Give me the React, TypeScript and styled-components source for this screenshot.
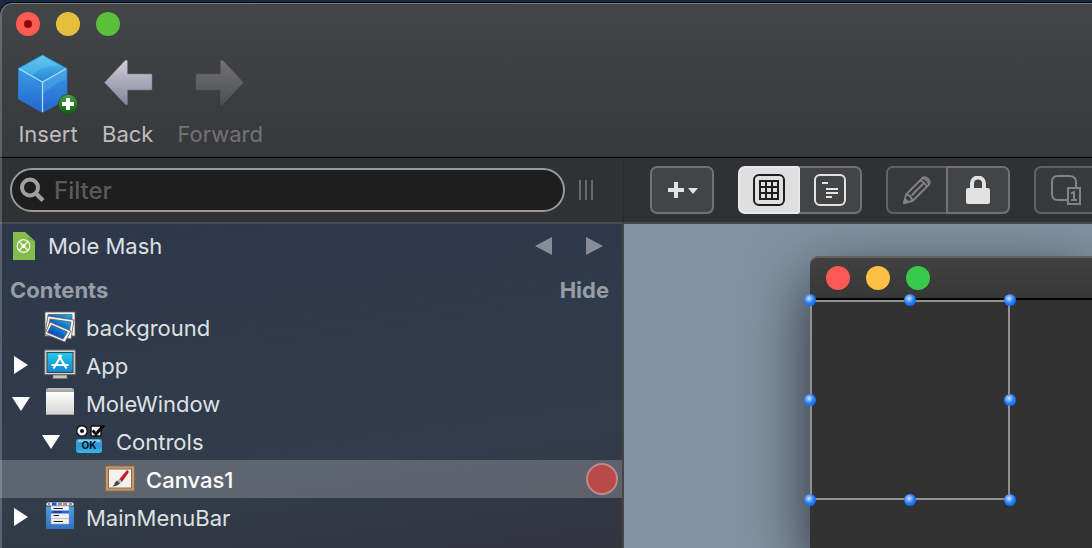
import React, { useState } from "react";
import styled, { createGlobalStyle, css } from "styled-components";

const GlobalStyle = createGlobalStyle`
  *, *::before, *::after { box-sizing: border-box; }
  html, body, #root { height: 100%; margin: 0; }
  body {
    background: #1b2a40;
    color: #dfe0e2;
    font-family: Inter, Roboto, "Liberation Sans", sans-serif;
    font-size: 22px;
    line-height: 28px;
    overflow: hidden;
  }
  button, input { font: inherit; color: inherit; }
  button { border: 0; padding: 0; background: none; cursor: pointer; }
  svg { display: block; flex: none; }
`;

const Page = styled.div`
  height: 100vh;
  padding-top: 3px;
`;

const AppWindow = styled.div`
  position: relative;
  display: flex;
  flex-direction: column;
  height: 100%;
  overflow: hidden;
  border-radius: 12px 0 0 0;
  box-shadow: 0 0 0 1px #07090c;

  &::after {
    content: "";
    position: absolute;
    inset: 0;
    border-left: 2px solid rgba(255, 255, 255, 0.2);
    border-top: 1px solid rgba(255, 255, 255, 0.3);
    border-radius: 12px 0 0 0;
    pointer-events: none;
  }
`;

const Header = styled.header`
  flex: none;
  padding: 9px 16px 9px;
  background: linear-gradient(#444547, #37383b);
  border-bottom: 1px solid #000;
`;

const Lights = styled.div`
  display: flex;
  gap: 16px;
`;

const Light = styled.button<{ $color: string }>`
  display: grid;
  place-items: center;
  width: 24px;
  height: 24px;
  border-radius: 50%;
  background: ${(p) => p.$color};
`;

const EditedDot = styled.span`
  width: 8px;
  height: 8px;
  border-radius: 50%;
  background: #8f0407;
`;

const Tools = styled.div`
  display: flex;
  gap: 24px;
  margin-top: 18px;
  padding-left: 2px;
`;

const Tool = styled.button`
  display: flex;
  flex-direction: column;
  align-items: center;
  gap: 6px;
  color: #bcbdbf;

  &:disabled { color: #727376; }
`;

const Bar = styled.div`
  flex: none;
  display: flex;
  background: #303134;
`;

const FilterSide = styled.div`
  flex: none;
  display: flex;
  align-items: center;
  gap: 14px;
  width: 624px;
  max-width: 60%;
  height: 66px;
  padding: 0 30px 0 10px;
  border-right: 1px solid #2a2b2e;
  border-bottom: 2px solid #414b5a;
`;

const FilterField = styled.label`
  flex: 1;
  min-width: 0;
  display: flex;
  align-items: center;
  gap: 9px;
  height: 44px;
  padding: 0 16px 0 7px;
  border: 2px solid #999;
  border-radius: 22px;
  background: #1e1e1e;
`;

const FilterInput = styled.input`
  flex: 1;
  min-width: 0;
  border: 0;
  padding: 2px 0 0;
  outline: 0;
  background: none;
  font-size: 24px;
  font-weight: 500;

  &::placeholder { color: #5a5a5a; opacity: 1; }
`;

const Grip = styled.div`
  width: 14px;
  height: 20px;
  border: solid #6a6a6b;
  border-width: 0 2px;
  background: linear-gradient(#6a6a6b, #6a6a6b) center / 2px 100% no-repeat;
`;

const ButtonSide = styled.div`
  flex: 1;
  min-width: 0;
  overflow: hidden;
  display: flex;
  align-items: center;
  gap: 24px;
  padding-left: 26px;
  border-bottom: 2px solid #47484b;
`;

const Group = styled.div`
  flex: none;
  display: flex;
`;

const Segment = styled.button<{ $tone?: "raised" | "active" | "muted"; $divider?: string }>`
  display: grid;
  place-items: center;
  width: 64px;
  height: 48px;
  border: 2px solid #727274;
  background: #434446;
  color: #e2e2e2;

  &:first-child { border-top-left-radius: 7px; border-bottom-left-radius: 7px; }
  &:last-child { border-top-right-radius: 7px; border-bottom-right-radius: 7px; }
  &:not(:last-child) { width: 60px; border-right: 0; }

  ${(p) => p.$tone === "active" && css`
    border-color: #e9e9e9;
    background: #dfdfdf;
    color: #1e1e1e;
  `}
  ${(p) => p.$tone === "muted" && css`
    border-color: #626264;
    background: #38393b;
    color: #828284;
  `}
  ${(p) => p.$divider && css`border-left-color: ${p.$divider};`}
`;

const Body = styled.div`
  flex: 1;
  min-height: 0;
  display: flex;
`;

const Sidebar = styled.aside`
  flex: none;
  width: 624px;
  max-width: 60%;
  overflow: hidden;
  border-right: 2px solid #464647;
  background: linear-gradient(172deg, #2d394a 0%, #2f3b4b 45%, #323c4a 70%, #32343e 100%);
`;

const ProjectRow = styled.div`
  display: flex;
  align-items: center;
  height: 44px;
  padding: 0 9px 0 12px;
`;

const ProjectName = styled.span`
  flex: 1;
  margin-left: 12px;
`;

const NavButton = styled.button`
  display: grid;
  place-items: center;
  width: 50px;
  height: 32px;
  margin-right: 0;
  color: #878c96;

  &:last-child { width: 50px; margin-right: -6px; }
`;

const SectionRow = styled.div`
  display: flex;
  justify-content: space-between;
  align-items: center;
  height: 40px;
  padding: 4px 13px 0 10px;
  color: #989ca4;
  font-weight: 700;
`;

const HideButton = styled.button`
  font-weight: 700;
`;

const Tree = styled.ul`
  margin: 0;
  padding: 0;
  list-style: none;
`;

const Item = styled.li<{ $depth: number; $selected?: boolean }>`
  display: flex;
  align-items: center;
  height: 38px;
  padding: 0 4px 0 ${(p) => 10 + p.$depth * 30}px;
  ${(p) => p.$selected && css`
    background: rgba(255, 255, 255, 0.21);
    color: #fff;
    font-weight: 500;
  `}
`;

const Disclosure = styled.button`
  display: grid;
  place-items: center;
  width: 22px;
  height: 24px;
  color: #fff;
`;

const DisclosureSpace = styled.span`
  width: 22px;
`;

const ItemIcon = styled.span`
  margin: 0 10px 0 12px;
`;

const ItemName = styled.span`
  flex: 1;
  padding-top: 2px;
`;

const Breakpoint = styled.button`
  width: 32px;
  height: 32px;
  border: 2px solid #c08a8b;
  border-radius: 50%;
  background: #b94a4a;
`;

const Canvas = styled.main`
  flex: 1;
  min-width: 0;
  display: flex;
  overflow: hidden;
  padding: 32px 0 0 186px;
  background: #8192a2;
`;

const DesignWindow = styled.section`
  flex: 1;
  min-width: 240px;
  display: flex;
  flex-direction: column;
  background: #323232;
  border-top-left-radius: 9px;
  box-shadow: 0 24px 64px rgba(0, 0, 0, 0.7);
`;

const DesignTitle = styled.div`
  flex: none;
  display: flex;
  align-items: center;
  gap: 16px;
  height: 44px;
  padding-left: 16px;
  border-top: 2px solid #636364;
  border-bottom: 2px solid #000;
  border-top-left-radius: 9px;
  background: linear-gradient(#414141, #373737);
`;

const DesignContent = styled.div`
  flex: 1;
`;

const Selection = styled.div`
  position: relative;
  width: 200px;
  height: 200px;
  border: 2px solid #919191;
`;

const Handle = styled.span<{ $x: number; $y: number }>`
  position: absolute;
  left: calc(${(p) => p.$x}% - 2px + ${(p) => p.$x / 25}px);
  top: calc(${(p) => p.$y}% - 2px + ${(p) => p.$y / 25}px);
  width: 12px;
  height: 12px;
  margin: -6px 0 0 -6px;
  border-radius: 50%;
  background: radial-gradient(circle at 42% 38%, #dbe9ff 0, #8ab7ff 20%, #2b80ff 45%, #0f74ff 65%);
`;

const CubeIcon = () => (
  <svg width="60" height="60" viewBox="0 0 60 60" aria-hidden="true">
    <defs>
      <linearGradient id="cubeTop" x1="0" y1="0" x2="0" y2="1">
        <stop offset="0" stopColor="#5cc7ee" /><stop offset="1" stopColor="#2482d8" />
      </linearGradient>
      <linearGradient id="cubeSide" x1="0" y1="0" x2="0" y2="1">
        <stop offset="0" stopColor="#42ade8" /><stop offset="1" stopColor="#2464d2" />
      </linearGradient>
      <linearGradient id="plusGreen" x1="0" y1="0" x2="0" y2="1">
        <stop offset="0" stopColor="#4ba044" /><stop offset="1" stopColor="#155d12" />
      </linearGradient>
    </defs>
    <path d="M24.500 1L49 14.500V45L24.500 58.500L0 45V14.500Z" fill="url(#cubeSide)" />
    <path d="M24.500 1L49 14.500L24.500 28L0 14.500Z" fill="url(#cubeTop)" />
    <path d="M6 11L24.500 1L45 12Q24 10 14 22L0 14.500Z" fill="#65d2f3" opacity=".35" />
    <path d="M24.500 28L49 14.500V25Q36 29 24.500 41Z" fill="#6ccaf5" opacity=".25" />
    <path d="M.500 14.500L24.500 28L48.500 14.500M24.500 28V58" stroke="#a9def7" strokeWidth="1.300" fill="none" />
    <path d="M24.500 1L49 14.500V45L24.500 58.500L.500 45V14.500Z" fill="none" stroke="#2373cf" strokeWidth="1" opacity=".8" />
    <circle cx="50" cy="50" r="9.600" fill="url(#plusGreen)" stroke="#185c17" strokeWidth=".8" />
    <path d="M50 44V56M44 50H56" stroke="#fff" strokeWidth="4" />
  </svg>
);

const ArrowIcon = ({ forward = false }: { forward?: boolean }) => (
  <svg width="50" height="60" viewBox="0 0 50 60" aria-hidden="true">
    <defs>
      <linearGradient id={forward ? "arrowF" : "arrowB"} x1="0" y1="0" x2="0" y2="1">
        <stop offset="0" stopColor={forward ? "#717176" : "#cfced9"} />
        <stop offset="1" stopColor={forward ? "#4e4e56" : "#858399"} />
      </linearGradient>
    </defs>
    <path
      d="M1.500 28.500L22 6.500Q24.500 5 24.500 7.500V20H48Q49 20 49 21V35Q49 36 48 36H24.500V49.500Q24.500 52 22 50Z"
      transform={forward ? "matrix(-1 0 0 1 50 0)" : undefined}
      fill={`url(#${forward ? "arrowF" : "arrowB"})`}
      stroke={forward ? "#55565b" : "#77778a"} strokeWidth=".6"
    />
  </svg>
);

const SearchIcon = () => (
  <svg width="26" height="26" viewBox="0 0 26 26" aria-hidden="true" fill="none" stroke="#a0a0a0">
    <circle cx="11" cy="10.500" r="8" strokeWidth="4" />
    <path d="M16.500 16L24 23.500" strokeWidth="4.500" />
  </svg>
);

const AddIcon = () => (
  <svg width="32" height="18" viewBox="0 0 32 18" aria-hidden="true">
    <path d="M10 1V17M2 9H18" stroke="currentColor" strokeWidth="4" />
    <path d="M22 7H32L27 13Z" fill="currentColor" />
  </svg>
);

const GridIcon = () => (
  <svg width="32" height="32" viewBox="0 0 32 32" aria-hidden="true" fill="none" stroke="currentColor" strokeWidth="2">
    <rect x="1" y="1" width="30" height="30" rx="5" />
    <path d="M7 7H25V25H7ZM13 7V25M19 7V25M7 13H25M7 19H25" />
  </svg>
);

const OutlineIcon = () => (
  <svg width="32" height="32" viewBox="0 0 32 32" aria-hidden="true" fill="none" stroke="currentColor" strokeWidth="2">
    <rect x="1" y="1" width="30" height="30" rx="5" />
    <path d="M8 9H14M12 15H24M12 19H24M12 23H18" />
  </svg>
);

const PencilIcon = () => (
  <svg width="30" height="30" viewBox="0 0 30 30" aria-hidden="true" fill="none" stroke="currentColor" strokeWidth="1.800" strokeLinejoin="round">
    <path d="M2 28L4 19.500L20.500 3Q23 1 26 4T27 9.500L10.500 26Z" />
    <path d="M4 19.500Q9 20 10.500 26M9.500 20.500L22.500 7.500M18 5.500Q23 7 24.500 12M20.500 3Q25.500 4.500 27 9.500" />
    <path d="M2 28L3 24L6 27Z" fill="currentColor" />
  </svg>
);

const LockIcon = () => (
  <svg width="24" height="28" viewBox="0 0 24 28" aria-hidden="true">
    <path d="M6 13V7.500A6 6 0 0 1 18 7.500V13" fill="none" stroke="currentColor" strokeWidth="4" />
    <rect y="12" width="24" height="16" rx="2" fill="currentColor" />
  </svg>
);

const TabOrderIcon = () => (
  <svg width="30" height="30" viewBox="0 0 30 30" aria-hidden="true" fill="none" stroke="currentColor" strokeWidth="2">
    <path d="M16 25H7Q1 25 1 19V7Q1 1 7 1H18Q25 1 25 7V12" />
    <rect x="17" y="13" width="12" height="16" fill="#38393b" />
    <path d="M20 18.500L23 17V25M20 25H26" />
  </svg>
);

const ProjectIcon = () => (
  <svg width="24" height="30" viewBox="0 0 24 30" aria-hidden="true">
    <path d="M1 1H13L23 10V29H1Z" fill="#84bd4c" />
    <path d="M15 6L17 8.500L23 10Z" fill="#5e9a38" />
    <g fill="none" stroke="#eef7e5" strokeWidth="1.200">
      <circle cx="11.500" cy="15" r="6.300" />
      <path d="M7 10.500L16 19.500M16 10.500L7 19.500" />
    </g>
    <circle cx="11.500" cy="15" r="2" fill="#fff" />
  </svg>
);

const Triangle = ({ dir }: { dir: "left" | "right" | "down" }) => (
  <svg width="18" height="18" viewBox="0 0 18 18" aria-hidden="true" fill="currentColor">
    {dir === "left" && <path d="M0 9L17 0V18Z" />}
    {dir === "right" && <path d="M18 9L1 0V18Z" />}
    {dir === "down" && <path d="M0 3H18L9 17Z" />}
  </svg>
);

const DisclosureRight = () => (
  <svg width="18" height="18" viewBox="0 0 18 18" aria-hidden="true" fill="currentColor">
    <path d="M2 0V18L16 9Z" />
  </svg>
);

const PhotosIcon = () => (
  <svg width="32" height="32" viewBox="0 0 32 32" aria-hidden="true">
    <defs>
      <linearGradient id="photo" x1="0" y1="1" x2="1" y2="0">
        <stop offset="0" stopColor="#0a2aa0" /><stop offset=".5" stopColor="#0a66c8" /><stop offset="1" stopColor="#1dc0ec" />
      </linearGradient>
    </defs>
    <g stroke="#64605e" strokeWidth=".8" fill="#f5f3f1">
      <path d="M1 1H31V25H1Z" />
      <path d="M4 3.500H28V12H4Z" fill="url(#photo)" />
      <path d="M4 5L30 9L27 28L1 22Z" />
      <path d="M6 8L27 11L25 22L4 18Z" fill="url(#photo)" />
      <path d="M6 11L27 20L21 31L1 23Z" />
      <path d="M7.500 14L23.500 21L19 28L3.500 21.500Z" fill="url(#photo)" />
    </g>
  </svg>
);

const AppIcon = () => (
  <svg width="32" height="32" viewBox="0 0 32 32" aria-hidden="true">
    <defs>
      <linearGradient id="screen" x1="0" y1="0" x2="0" y2="1">
        <stop offset="0" stopColor="#23cbe9" /><stop offset="1" stopColor="#1582d2" />
      </linearGradient>
    </defs>
    <path d="M9 26H23V29.500H9Z" fill="#c9c5c2" stroke="#74706e" strokeWidth=".8" />
    <path d="M.700 1H31.300V25.500H.700Z" fill="#d8d5d3" stroke="#6d6967" />
    <rect x="3" y="3.500" width="26" height="20" fill="url(#screen)" stroke="#34454f" />
    <path d="M17.500 6L9.500 19.500M14.500 6L22.500 19.500M7.500 16H24.500" stroke="#fff" strokeWidth="2.200" fill="none" />
  </svg>
);

const WindowIcon = () => (
  <svg width="32" height="32" viewBox="0 0 32 32" aria-hidden="true">
    <defs>
      <linearGradient id="pane" x1="0" y1="0" x2="0" y2="1">
        <stop offset="0" stopColor="#fff" /><stop offset="1" stopColor="#d6d4d4" />
      </linearGradient>
    </defs>
    <path d="M2 6V3Q2 1 4 1H28Q30 1 30 3V6Z" fill="#a5a3a3" />
    <path d="M4 2H28" stroke="#cfcdcd" />
    <rect x="2" y="5" width="28" height="22" fill="url(#pane)" />
    <path d="M2 27.500H30" stroke="#9c9b9d" />
  </svg>
);

const ControlsIcon = () => (
  <svg width="32" height="32" viewBox="0 0 32 32" aria-hidden="true">
    <defs>
      <linearGradient id="okFill" x1="0" y1="0" x2="0" y2="1">
        <stop offset="0" stopColor="#48a9dc" /><stop offset=".5" stopColor="#2f96d5" /><stop offset="1" stopColor="#3fb8eb" />
      </linearGradient>
    </defs>
    <circle cx="8" cy="6" r="5.300" fill="#fff" stroke="#111" strokeWidth="1.400" />
    <circle cx="8" cy="6" r="2" fill="#111" />
    <rect x="17" y="1" width="10" height="10" rx="1" fill="#fff" stroke="#111" strokeWidth="1.400" />
    <path d="M18.500 5.500L22 9L30 0" stroke="#0b0b0b" strokeWidth="3" fill="none" />
    <rect x="2" y="14" width="26" height="14" rx="3" fill="url(#okFill)" />
    <path d="M4 16H26" stroke="#73d3ef" strokeWidth="2" />
    <text x="15" y="24" textAnchor="middle" fontSize="10" fontWeight="700" fill="#06131d">OK</text>
  </svg>
);

const CanvasIcon = () => (
  <svg width="32" height="32" viewBox="0 0 32 32" aria-hidden="true">
    <rect x="1.500" y="3" width="29" height="25" fill="#c89a6c" stroke="#8f6845" />
    <rect x="4.500" y="6" width="23" height="19" fill="#f3f2f1" stroke="#8a6c50" />
    <path d="M15 17L23 7.500Q25 7.500 24 10L17.500 19Z" fill="#d8161b" stroke="#8d0d10" strokeWidth=".5" />
    <path d="M13 18L15.500 16L18 18.500L15.500 20.500Z" fill="#b5b5b5" />
    <path d="M13 17.500L16 20.500Q13 23.500 8 23.500Q11 21.500 11 19.500Z" fill="#55483f" />
  </svg>
);

const MenuBarIcon = () => (
  <svg width="32" height="32" viewBox="0 0 32 32" aria-hidden="true">
    <defs>
      <linearGradient id="desk" x1="0" y1="0" x2="0" y2="1">
        <stop offset="0" stopColor="#4fa3df" /><stop offset="1" stopColor="#3470c4" />
      </linearGradient>
    </defs>
    <rect x="2" y="2" width="28" height="26" rx="1" fill="url(#desk)" />
    <path d="M2 5V3Q2 1 4 1H28Q30 1 30 3V5Z" fill="#efefef" stroke="#303234" strokeWidth=".8" />
    <path d="M4 3H6M14 3H18M19 3H23M25 3H28" stroke="#343434" strokeWidth="1.200" />
    <path d="M8 1.500H12.500V4.500H8Z" fill="#1f56e0" />
    <rect x="7" y="5" width="18" height="18" fill="#f0f0f0" stroke="#8fa6bd" strokeWidth=".5" />
    <path d="M7 9.500H25V12.500H7Z" fill="#2463ea" />
    <path d="M9.500 7.500H19M9.500 11H18M9.500 14.500H15M9.500 20.500H19" stroke="#222" strokeWidth="1.100" />
    <path d="M7 17.500H25" stroke="#c5c5c5" />
  </svg>
);

type Node = {
  name: string;
  depth: number;
  icon: React.ReactNode;
  state?: "open" | "closed";
  marked?: boolean;
};

const nodes: Node[] = [
  { name: "background", depth: 0, icon: <PhotosIcon /> },
  { name: "App", depth: 0, icon: <AppIcon />, state: "closed" },
  { name: "MoleWindow", depth: 0, icon: <WindowIcon />, state: "open" },
  { name: "Controls", depth: 1, icon: <ControlsIcon />, state: "open" },
  { name: "Canvas1", depth: 2, icon: <CanvasIcon />, marked: true },
  { name: "MainMenuBar", depth: 0, icon: <MenuBarIcon />, state: "closed" },
];

const handles = [[0, 0], [50, 0], [100, 0], [0, 50], [100, 50], [0, 100], [50, 100], [100, 100]];

export default function App() {
  const [filter, setFilter] = useState("");
  const [selected, setSelected] = useState("Canvas1");

  return (
    <>
      <GlobalStyle />
      <Page>
        <AppWindow>
          <Header>
            <Lights>
              <Light $color="#fe5a54" aria-label="Close"><EditedDot /></Light>
              <Light $color="#e5bf3c" aria-label="Minimize" />
              <Light $color="#59c139" aria-label="Zoom" />
            </Lights>
            <Tools>
              <Tool><CubeIcon />Insert</Tool>
              <Tool><ArrowIcon />Back</Tool>
              <Tool disabled><ArrowIcon forward />Forward</Tool>
            </Tools>
          </Header>

          <Bar>
            <FilterSide>
              <FilterField>
                <SearchIcon />
                <FilterInput
                  aria-label="Filter"
                  placeholder="Filter"
                  value={filter}
                  onChange={(e) => setFilter(e.target.value)}
                />
              </FilterField>
              <Grip />
            </FilterSide>
            <ButtonSide>
              <Group><Segment aria-label="Add"><AddIcon /></Segment></Group>
              <Group>
                <Segment $tone="active" aria-label="Layout view"><GridIcon /></Segment>
                <Segment $divider="#e9e9e9" aria-label="Outline view"><OutlineIcon /></Segment>
              </Group>
              <Group>
                <Segment $tone="muted" aria-label="Edit"><PencilIcon /></Segment>
                <Segment aria-label="Lock"><LockIcon /></Segment>
              </Group>
              <Group><Segment $tone="muted" aria-label="Tab order"><TabOrderIcon /></Segment></Group>
            </ButtonSide>
          </Bar>

          <Body>
            <Sidebar>
              <ProjectRow>
                <ProjectIcon />
                <ProjectName>Mole Mash</ProjectName>
                <NavButton aria-label="Previous"><Triangle dir="left" /></NavButton>
                <NavButton aria-label="Next"><Triangle dir="right" /></NavButton>
              </ProjectRow>
              <SectionRow>
                <span>Contents</span>
                <HideButton>Hide</HideButton>
              </SectionRow>
              <Tree>
                {nodes
                  .filter((n) => n.name.toLowerCase().includes(filter.toLowerCase()))
                  .map((n) => (
                    <Item
                      key={n.name}
                      $depth={n.depth}
                      $selected={n.name === selected}
                      onClick={() => setSelected(n.name)}
                    >
                      {n.state ? (
                        <Disclosure aria-label={`Toggle ${n.name}`} aria-expanded={n.state === "open"}>
                          {n.state === "open" ? <Triangle dir="down" /> : <DisclosureRight />}
                        </Disclosure>
                      ) : (
                        <DisclosureSpace />
                      )}
                      <ItemIcon>{n.icon}</ItemIcon>
                      <ItemName>{n.name}</ItemName>
                      {n.marked && <Breakpoint aria-label="Record" />}
                    </Item>
                  ))}
              </Tree>
            </Sidebar>

            <Canvas>
              <DesignWindow>
                <DesignTitle>
                  <Light $color="#fe5955" aria-label="Close preview" />
                  <Light $color="#fec143" aria-label="Minimize preview" />
                  <Light $color="#35ca4b" aria-label="Zoom preview" />
                </DesignTitle>
                <DesignContent>
                  <Selection>
                    {handles.map(([x, y]) => (
                      <Handle key={`${x}-${y}`} $x={x} $y={y} />
                    ))}
                  </Selection>
                </DesignContent>
              </DesignWindow>
            </Canvas>
          </Body>
        </AppWindow>
      </Page>
    </>
  );
}
